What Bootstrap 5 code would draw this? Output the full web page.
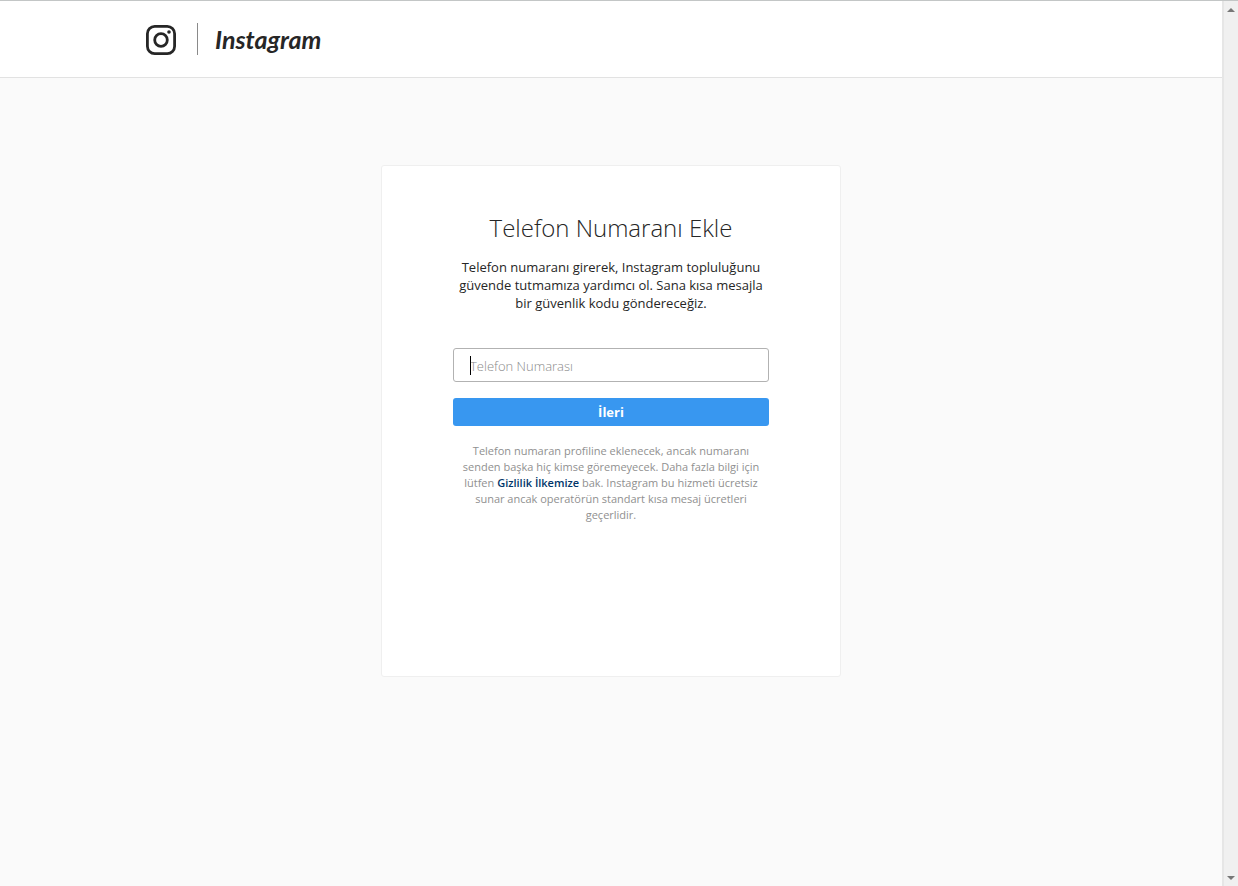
<!DOCTYPE html>
<html lang="tr">
<head>
<meta charset="utf-8">
<meta name="viewport" content="width=device-width, initial-scale=1">
<title>Telefon Numaranı Ekle • Instagram</title>
<link href="https://cdn.jsdelivr.net/npm/bootstrap@5.3.0/dist/css/bootstrap.min.css" rel="stylesheet">
<style>
body{font-family:"Open Sans","Noto Sans",sans-serif;background:#fafafa;color:#262626;border-top:1px solid #c3c6c6;font-size:13px;line-height:18px}
.site-header{border-bottom:1px solid #e2e2e2;padding:22px 16px}
.header-inner{max-width:930px;min-height:32px}
.brand{color:#262626}
.brand-rule{width:1px;height:32px;background:#8a8a8a;margin:0 17px 0 21px}
.wordmark{font-family:Lato,sans-serif;font-style:italic;font-weight:700;font-size:25px;line-height:32px}
.phone-card{max-width:460px;min-height:512px;margin-top:87px;padding:43px 71px;border:1px solid #efefef;border-radius:3px}
.phone-card h1{font-size:24px;line-height:38px;font-weight:300;margin-bottom:11px}
.intro{margin-bottom:36px}
.phone-input{height:34px;border:1px solid #b2b2b2;border-radius:3px;padding:2px 16px 0;font-size:13px;font-weight:300;color:#262626}
.phone-input::placeholder{color:#8a8a8a;opacity:1}
.phone-input:focus{border-color:#b2b2b2;box-shadow:none}
.caret{position:absolute;left:17px;top:8px;width:1px;height:19px;background:#000}
.next-btn{height:28px;padding:0;border:0;border-radius:3px;background:#3897f0;font-size:13px;line-height:28px;font-weight:700;margin:16px 0 17px}
.note{font-size:11px;line-height:16px;color:#909090}
.note a{color:#003569;font-weight:600}
.scroll-track{width:16px;background:#f0f0f0;border-left:2px solid #e6e6e6;padding:7px 0 7px}
</style>
</head>
<body>
<div class="d-flex min-vh-100">
  <div class="flex-fill d-flex flex-column">
    <header class="site-header bg-white">
      <div class="header-inner mx-auto d-flex align-items-center">
        <a class="brand d-flex align-items-center text-decoration-none" href="#">
          <svg width="30" height="32" viewBox="0 -2 30 32" fill="none" stroke="#262626" stroke-width="2.8" aria-hidden="true">
            <rect x="1.4" y="1.4" width="27.2" height="27.2" rx="7.3"/>
            <circle cx="15" cy="15" r="6.3"/>
            <circle cx="23" cy="7" r="1.8" fill="#262626" stroke="none"/>
          </svg>
          <span class="brand-rule"></span>
          <span class="wordmark">Instagram</span>
        </a>
      </div>
    </header>
    <main class="px-3 pb-4">
      <section class="phone-card bg-white mx-auto text-center">
        <h1>Telefon Numaranı Ekle</h1>
        <p class="intro">Telefon numaranı girerek, Instagram topluluğunu güvende tutmamıza yardımcı ol. Sana kısa mesajla bir güvenlik kodu göndereceğiz.</p>
        <form>
          <div class="position-relative">
            <input class="form-control phone-input" id="phone" type="tel" placeholder="Telefon Numarası" aria-label="Telefon Numarası">
            <span class="caret"></span>
          </div>
          <button class="btn btn-primary next-btn w-100 d-block" type="button">İleri</button>
        </form>
        <p class="note mb-0">Telefon numaran profiline eklenecek, ancak numaranı<br>senden başka hiç kimse göremeyecek. Daha fazla bilgi için<br>lütfen <a class="text-decoration-none" href="#">Gizlilik İlkemize</a> bak. Instagram bu hizmeti ücretsiz<br>sunar ancak operatörün standart kısa mesaj ücretleri<br>geçerlidir.</p>
      </section>
    </main>
  </div>
  <div class="scroll-track d-flex flex-column justify-content-between align-items-center vh-100 sticky-top" aria-hidden="true">
    <svg width="8" height="4" viewBox="0 0 8 4"><path d="M4 0 8 4H0z" fill="#777"/></svg>
    <svg width="8" height="4" viewBox="0 0 8 4"><path d="M0 0H8L4 4z" fill="#777"/></svg>
  </div>
</div>
<script src="https://cdn.jsdelivr.net/npm/bootstrap@5.3.0/dist/js/bootstrap.bundle.min.js"></script>
</body>
</html>
